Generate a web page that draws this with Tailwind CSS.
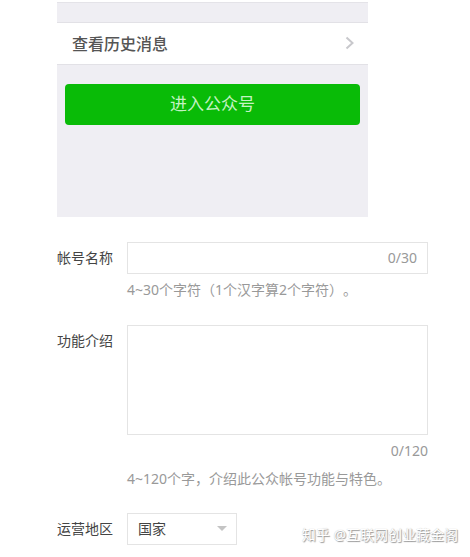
<!DOCTYPE html>
<html lang="zh-CN">

<head>
    <meta charset="UTF-8">
    <meta name="viewport" content="width=device-width, initial-scale=1.0">
    <title>公众号设置</title>
    <script src="https://cdn.jsdelivr.net/npm/@tailwindcss/browser@4"></script>
</head>

<body class="relative min-h-screen bg-white pl-[57px] pr-[42px] pt-[2px] text-sm text-[#444] font-['Noto_Sans','Noto_Sans_CJK_SC',sans-serif] [text-spacing-trim:space-all]">
    <!-- phone preview -->
    <section class="mr-[60px] bg-[#efeef3] border-t border-[#e4e3e8] pt-[19px] pb-[92px]">
        <a href="#" class="flex items-center justify-between h-[43px] bg-white border-y border-[#e2e1e6] pl-[15px] pr-3 pb-[2px] text-base font-medium text-[#555] font-['Noto_Sans_CJK_SC',sans-serif]">
            查看历史消息
            <svg class="w-3 h-4" viewBox="0 0 12 16" fill="none" stroke="#c8c8cc" stroke-width="2">
                <path d="M2.5 2.5 8.5 8l-6 5.5" />
            </svg>
        </a>
        <div class="px-2 pt-[19px]">
            <button type="button" class="block w-full h-[41px] rounded bg-[#09bb07] pb-[2px] text-[17px] text-[#c4f2c3] font-['Noto_Sans_CJK_SC',sans-serif]">进入公众号</button>
        </div>
    </section>

    <form class="mt-[25px]">
        <div class="flex">
            <label for="name" class="w-[70px] shrink-0 leading-8">帐号名称</label>
            <div class="flex-1">
                <div class="flex items-center h-8 border border-[#e4e4e4] px-[10px]">
                    <input id="name" type="text" class="flex-1 min-w-0 outline-none">
                    <span class="text-[#999]">0/30</span>
                </div>
                <p class="mt-1 leading-6 text-[#999]">4~30个字符（1个汉字算2个字符）。</p>
            </div>
        </div>

        <div class="flex mt-[23px]">
            <label for="intro" class="w-[70px] shrink-0 leading-8">功能介绍</label>
            <div class="flex-1">
                <textarea id="intro" class="block w-full h-[110px] border border-[#e4e4e4] resize-none outline-none p-2"></textarea>
                <p class="mt-1 leading-6 text-right text-[#999]">0/120</p>
                <p class="mt-1 leading-6 text-[#999]">4~120个字，介绍此公众帐号功能与特色。</p>
            </div>
        </div>

        <div class="flex mt-[22px]">
            <label for="region" class="w-[70px] shrink-0 leading-8">运营地区</label>
            <div class="relative">
                <select id="region" class="block appearance-none w-[110px] h-8 border border-[#e4e4e4] bg-white px-[10px] outline-none">
                    <option>国家</option>
                </select>
                <svg class="absolute right-[10px] top-[13px] w-[10px] h-[5px] pointer-events-none" viewBox="0 0 10 5" fill="#c4c4c4">
                    <path d="M0 0h10L5 5z" />
                </svg>
            </div>
        </div>
    </form>

    <!-- watermark -->
    <div class="absolute right-[12px] bottom-[10px] leading-6 text-white [text-shadow:1px_1px_1px_#999,0_0_1px_#bbb]">知乎 @互联网创业藏金阁</div>
</body>

</html>
